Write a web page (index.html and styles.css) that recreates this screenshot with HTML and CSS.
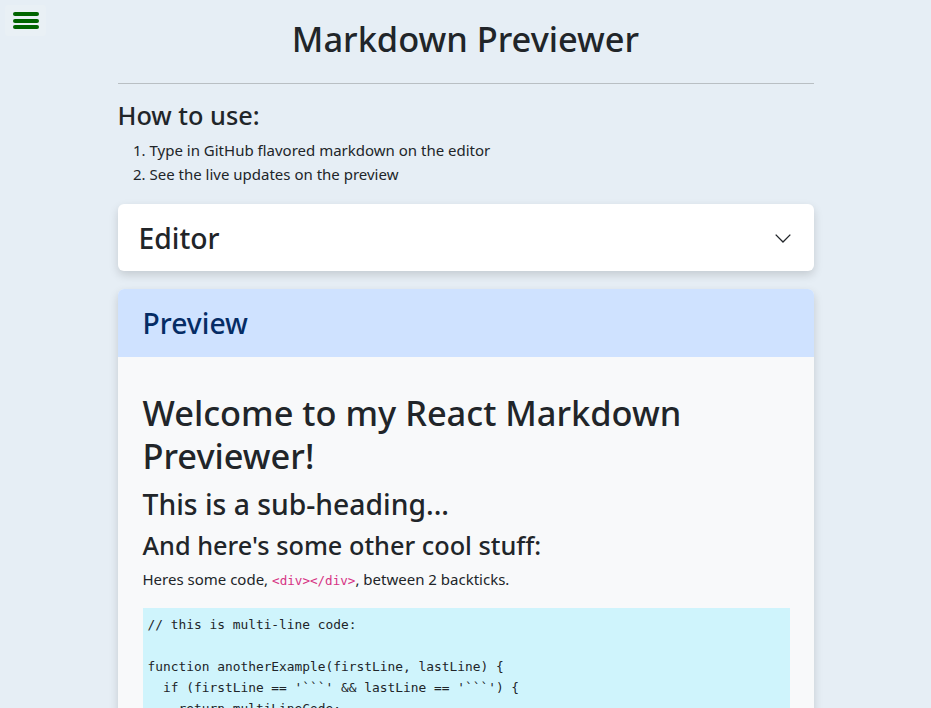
FILE: index.html
```html
<!DOCTYPE html>
<html lang="en">
<head>
<meta charset="utf-8">
<title>Markdown Previewer</title>
<link rel="stylesheet" href="styles.css">
</head>
<body>
<button class="menu-btn" aria-label="Menu">
  <span class="bar"></span><span class="bar"></span><span class="bar"></span>
</button>
<div class="container">
  <h1 class="title">Markdown Previewer</h1>
  <hr class="rule">
  <h3 class="howto">How to use:</h3>
  <ol class="steps">
    <li>Type in GitHub flavored markdown on the editor</li>
    <li>See the live updates on the preview</li>
  </ol>
  <div class="card editor-card">
    <div class="card-head">
      <h2 class="card-title">Editor</h2>
      <svg class="chev" width="18" height="18" viewBox="0 0 16 16"><path d="M1.5 5l6.5 6.5L14.5 5" fill="none" stroke="#212529" stroke-width="1.2"/></svg>
    </div>
  </div>
  <div class="card preview-card">
    <div class="card-head preview-head">
      <h2 class="card-title">Preview</h2>
    </div>
    <div class="preview-body">
      <h1 class="md-h1">Welcome to my React Markdown Previewer!</h1>
      <h2 class="md-h2">This is a sub-heading...</h2>
      <h3 class="md-h3">And here's some other cool stuff:</h3>
      <p class="md-p">Heres some code, <code class="inline-code">&lt;div&gt;&lt;/div&gt;</code>, between 2 backticks.</p>
<pre class="md-pre"><code>// this is multi-line code:

function anotherExample(firstLine, lastLine) {
  if (firstLine == '```' &amp;&amp; lastLine == '```') {
    return multiLineCode;
  }
}</code></pre>
    </div>
  </div>
</div>
</body>
</html>
```
FILE: styles.css
```css
* { box-sizing: border-box; }
html, body { margin: 0; padding: 0; }
body {
  background: #e6eef5;
  color: #212529;
  font-family: "Noto Sans", "Open Sans", sans-serif;
  font-size: 16px;
  line-height: 1.5;
}
.menu-btn {
  position: fixed;
  top: 5px;
  left: 5px;
  width: 41px;
  height: 31px;
  padding: 7px 7px 7px 8px;
  border: 0;
  border-radius: 3px;
  background: #e9f0f5;
  display: flex;
  flex-direction: column;
  justify-content: space-between;
}
.bar {
  display: block;
  width: 26px;
  height: 4px;
  border-radius: 2px;
  background: #006400;
}
.container {
  width: 720px;
  margin: 0 auto;
  padding: 0 12px;
}
.title {
  margin: 0;
  padding-top: 17px;
  text-align: center;
  font-size: 34.4px;
  font-weight: 500;
  line-height: 43px;
}
.rule {
  margin: 23px 0 16px;
  border: 0;
  border-top: 1px solid #b9bfc3;
}
.howto {
  margin: 0 0 6px;
  font-size: 25.3px;
  font-weight: 500;
  line-height: 31.7px;
}
.steps {
  margin: 0 0 18px;
  padding-left: 32px;
  font-size: 15px;
  line-height: 24px;
}
.card {
  border-radius: 6px;
  box-shadow: 0 4px 10px rgba(0, 0, 0, 0.15);
  overflow: hidden;
  margin-bottom: 18px;
}
.editor-card { background: #fff; }
.card-head {
  display: flex;
  align-items: center;
  justify-content: space-between;
  padding: 17px 22px 15px 21px;
}
.card-title {
  margin: 0;
  font-size: 28.3px;
  font-weight: 500;
  line-height: 35.5px;
}
.chev { flex: none; }
.preview-card { background: #f8f9fa; }
.preview-head {
  background: #cfe2ff;
  color: #052c65;
  padding-left: 25px;
}
.preview-body {
  padding: 34px 24px 24px 25px;
}
.md-h1 {
  margin: 0 0 10px;
  font-size: 34.4px;
  font-weight: 500;
  line-height: 43px;
}
.md-h2 {
  margin: 0 0 8px;
  font-size: 28.3px;
  font-weight: 500;
  line-height: 35.5px;
}
.md-h3 {
  margin: 0 0 6px;
  font-size: 25.3px;
  font-weight: 500;
  line-height: 31.7px;
}
.md-p {
  margin: 0 0 17px;
  font-size: 15px;
}
.inline-code {
  font-family: "DejaVu Sans Mono", monospace;
  font-size: 12.6px;
  color: #d63384;
}
.md-pre {
  margin: 0;
  padding: 6px 5px;
  background: #cff4fc;
  font-family: "DejaVu Sans Mono", monospace;
  font-size: 12.86px;
  line-height: 21px;
  color: #212529;
}
```
